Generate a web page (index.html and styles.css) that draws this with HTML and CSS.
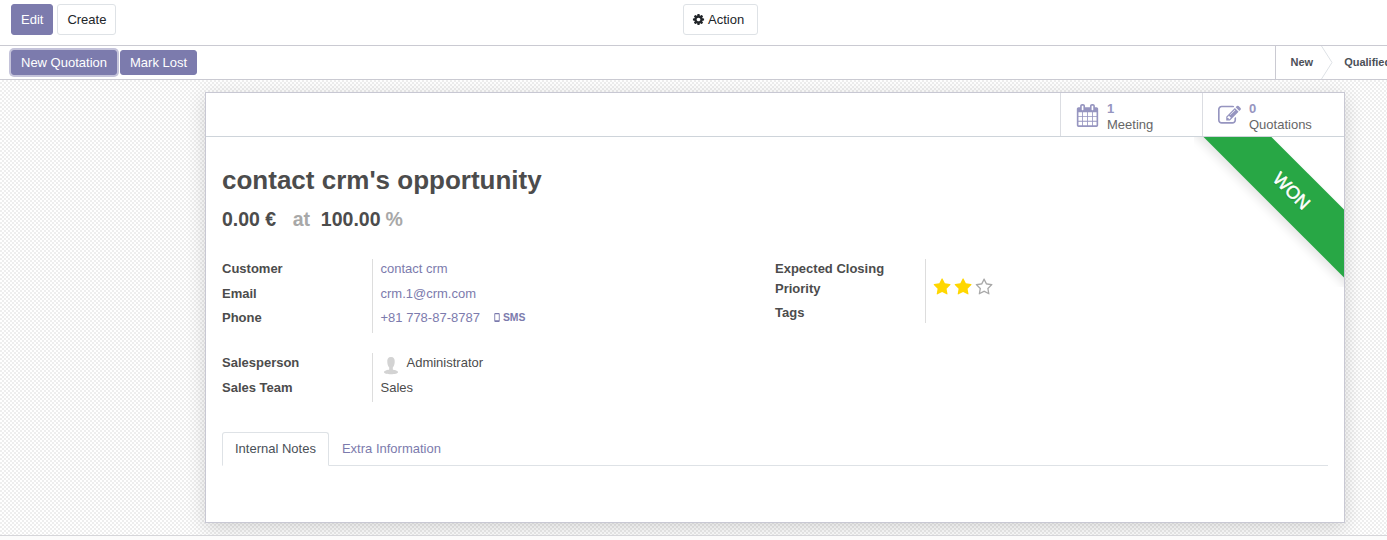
FILE: index.html
```html
<!DOCTYPE html>
<html lang="en">
<head>
<meta charset="utf-8">
<title>contact crm's opportunity</title>
<link rel="stylesheet" href="styles.css">
</head>
<body>
<header class="control-panel">
  <div class="panel-left">
    <button class="btn btn-primary">Edit</button>
    <button class="btn btn-light">Create</button>
  </div>
  <button class="btn btn-light btn-action">
    <svg class="icon-cog" viewBox="0 0 1792 1792"><path d="M1152 896q0-106-75-181t-181-75-181 75-75 181 75 181 181 75 181-75 75-181zm512-109v222q0 12-8 23t-20 13l-185 28q-19 54-39 91 35 50 107 138 10 12 10 25t-9 23q-27 37-99 108t-94 71q-12 0-26-9l-138-108q-44 23-91 38-16 136-29 186-7 28-36 28h-222q-14 0-24.5-8.5t-11.5-21.5l-28-184q-49-16-90-37l-141 107q-10 9-25 9-14 0-25-11-126-114-165-168-7-10-7-23 0-12 8-23 15-21 51-66.5t54-70.5q-27-50-41-99l-183-27q-13-2-21-12.5t-8-23.5v-222q0-12 8-23t19-13l186-28q14-46 39-92-40-57-107-138-10-12-10-24 0-10 9-23 26-36 98.5-107.5t94.5-71.5q13 0 26 10l138 107q44-23 91-38 16-136 29-186 7-28 36-28h222q14 0 24.5 8.5t11.5 21.5l28 184q49 16 90 37l142-107q9-9 24-9 13 0 25 10 129 119 165 170 7 8 7 22 0 12-8 23-15 21-51 66.5t-54 70.5q26 50 41 98l183 28q13 2 21 12.5t8 23.5z"/></svg>
    <span>Action</span>
  </button>
</header>
<div class="statusbar">
  <div class="status-buttons">
    <button class="btn btn-primary btn-focus">New Quotation</button>
    <button class="btn btn-primary">Mark Lost</button>
  </div>
  <div class="stages">
    <span class="stage">New</span>
    <svg class="chevron" viewBox="0 0 12 33"><path d="M0.5 0L11 16.5L0.5 33"/></svg>
    <span class="stage stage-next">Qualified</span>
  </div>
</div>
<main class="content">
  <section class="sheet">
    <div class="button-box">
      <a class="stat">
        <svg viewBox="0 0 1792 1792"><path d="M192 1664h288v-288h-288v288zm352 0h320v-288h-320v288zm-352-352h288v-320h-288v320zm352 0h320v-320h-320v320zm-352-384h288v-288h-288v288zm736 736h320v-288h-320v288zm-384-736h320v-288h-320v288zm768 736h288v-288h-288v288zm-384-352h320v-320h-320v320zm-352-864v-288q0-13-9.5-22.5t-22.5-9.5h-64q-13 0-22.5 9.5t-9.5 22.5v288q0 13 9.5 22.5t22.5 9.5h64q13 0 22.5-9.5t9.5-22.5zm736 864h288v-320h-288v320zm-384-384h320v-288h-320v288zm384 0h288v-288h-288v288zm32-480v-288q0-13-9.5-22.5t-22.5-9.5h-64q-13 0-22.5 9.5t-9.5 22.5v288q0 13 9.5 22.5t22.5 9.5h64q13 0 22.5-9.5t9.5-22.5zm384-64v1280q0 52-38 90t-90 38h-1408q-52 0-90-38t-38-90v-1280q0-52 38-90t90-38h128v-96q0-66 47-113t113-47h64q66 0 113 47t47 113v96h384v-96q0-66 47-113t113-47h64q66 0 113 47t47 113v96h128q52 0 90 38t38 90z"/></svg>
        <span class="stat-info"><b>1</b><span>Meeting</span></span>
      </a>
      <a class="stat">
        <svg viewBox="0 0 1792 1792"><path d="M888 1184l116-116-152-152-116 116v56h96v96h56zm440-720q-16-16-33 1l-350 350q-17 17-1 33t33-1l350-350q17-17 1-33zm80 594v190q0 119-84.5 203.5t-203.5 84.5h-832q-119 0-203.5-84.5t-84.5-203.5v-832q0-119 84.5-203.5t203.5-84.5h832q63 0 117 25 15 7 18 23 3 17-9 29l-49 49q-14 14-32 8-23-6-45-6h-832q-66 0-113 47t-47 113v832q0 66 47 113t113 47h832q66 0 113-47t47-113v-126q0-13 9-22l64-64q15-15 35-7t20 29zm-96-738l288 288-672 672h-288v-288zm444 132l-92 92-288-288 92-92q28-28 68-28t68 28l152 152q28 28 28 68t-28 68z"/></svg>
        <span class="stat-info"><b>0</b><span>Quotations</span></span>
      </a>
    </div>
    <div class="ribbon"><span>WON</span></div>
    <h1 class="title">contact crm's opportunity</h1>
    <h2 class="revenue"><span>0.00 €</span><span class="muted at">at</span><span>100.00</span><span class="muted percent">%</span></h2>
    <div class="groups">
      <dl class="group group-contact">
        <dt>Customer</dt><dd class="link">contact crm</dd>
        <dt>Email</dt><dd class="link">crm.1@crm.com</dd>
        <dt>Phone</dt><dd class="link phone">+81 778-87-8787
          <span class="sms"><svg viewBox="0 0 6 10"><path fill-rule="evenodd" d="M1 0h4q1 0 1 1v8q0 1-1 1H1q-1 0-1-1V1q0-1 1-1zM1 1.500v6.500h4V1.500z"/></svg>SMS</span></dd>
      </dl>
      <dl class="group group-closing">
        <dt>Expected Closing</dt><dd></dd>
        <dt>Priority</dt>
        <dd class="stars">
          <svg class="star-on" viewBox="0 0 1792 1792"><path d="M1728 647q0 22-26 48l-363 354 86 500q1 7 1 20 0 21-10.5 35.5t-30.5 14.5q-19 0-40-12l-449-236-449 236q-22 12-40 12-21 0-31.5-14.5t-10.5-35.5q0-6 2-20l86-500-364-354q-25-27-25-48 0-37 56-46l502-73 225-455q19-41 49-41t49 41l225 455 502 73q56 9 56 46z"/></svg>
          <svg class="star-on" viewBox="0 0 1792 1792"><path d="M1728 647q0 22-26 48l-363 354 86 500q1 7 1 20 0 21-10.5 35.5t-30.5 14.5q-19 0-40-12l-449-236-449 236q-22 12-40 12-21 0-31.5-14.5t-10.5-35.5q0-6 2-20l86-500-364-354q-25-27-25-48 0-37 56-46l502-73 225-455q19-41 49-41t49 41l225 455 502 73q56 9 56 46z"/></svg>
          <svg class="star-off" viewBox="0 0 1792 1792"><path d="M1201 1004l306-297-422-62-189-382-189 382-422 62 306 297-73 421 378-199 377 199zm527-357q0 22-26 48l-363 354 86 500q1 7 1 20 0 50-41 50-19 0-40-12l-449-236-449 236q-22 12-40 12-21 0-31.5-14.5t-10.5-35.5q0-6 2-20l86-500-364-354q-25-27-25-48 0-37 56-46l502-73 225-455q19-41 49-41t49 41l225 455 502 73q56 9 56 46z"/></svg>
        </dd>
        <dt>Tags</dt><dd></dd>
      </dl>
      <dl class="group group-sales">
        <dt>Salesperson</dt>
        <dd class="person"><svg viewBox="0 0 20 20"><path d="M10 2c-2.900 0-4 2-3.700 5 .1 2.500.8 4.500 1.900 5.500v2c-.8.600-5.200.8-5.200 2.700 0 1.300 3.300 2 7 2s7-.7 7-2c0-1.900-4.400-2.100-5.200-2.700v-2c1.100-1 1.800-3 1.900-5.500.3-3-.8-5-3.700-5z"/></svg>Administrator</dd>
        <dt>Sales Team</dt><dd>Sales</dd>
      </dl>
    </div>
    <nav class="tabs">
      <a class="tab active">Internal Notes</a>
      <a class="tab">Extra Information</a>
    </nav>
  </section>
</main>
<footer class="chatter"></footer>
</body>
</html>
```
FILE: styles.css
```css
* { box-sizing: border-box; }
body {
  margin: 0;
  height: 540px;
  overflow: hidden;
  display: flex;
  flex-direction: column;
  background: #fff;
  color: #4c4c4c;
  font: 13px/20px "Liberation Sans", Arial, sans-serif;
}
.btn {
  padding: 0 9px;
  border: 1px solid transparent;
  border-radius: 3px;
  font: inherit;
  white-space: nowrap;
}
.btn-primary { background: #7c7bad; border-color: #7c7bad; color: #fff; }
.btn-light { background: #fff; border-color: #dee2e6; color: #212529; }
.control-panel {
  flex: none;
  height: 46px;
  padding: 4px 0 0 11px;
  border-bottom: 1px solid #cacad2;
  display: flex;
  align-items: flex-start;
}
.control-panel .btn { height: 31px; }
.panel-left { width: 672px; display: flex; gap: 4px; }
.btn-action { width: 75px; display: flex; align-items: center; gap: 3px; }
.icon-cog { width: 13px; height: 13px; margin-left: -1px; fill: #212529; }
.statusbar {
  flex: none;
  height: 34px;
  padding-left: 11px;
  border-bottom: 1px solid #cacad2;
  display: flex;
  justify-content: space-between;
}
.status-buttons { display: flex; gap: 3px; padding-top: 4px; }
.status-buttons .btn { height: 25px; }
.status-buttons .btn-focus { box-shadow: 0 0 0 2px rgba(124, 123, 173, .45); }
.stages {
  width: 112px;
  flex: none;
  overflow: hidden;
  display: flex;
  align-items: center;
  border-left: 1px solid #cacad2;
  font-size: 11px;
  line-height: 18px;
  font-weight: bold;
  color: #4c5058;
}
.stage { margin: -2px 0 0 14.500px; }
.stage-next { margin-left: 11px; }
.chevron { flex: none; width: 12px; height: 33px; margin-left: 8px; fill: none; stroke: #dee2e6; }
.content {
  flex: none;
  height: 455px;
  padding: 12px 42px 0 205px;
  overflow: hidden;
  background: repeating-conic-gradient(#eee 0 25%, #fff 0 50%) 0 0 / 4px 4px;
}
.sheet {
  position: relative;
  height: 431px;
  padding: 0 16px;
  background: #fff;
  border: 1px solid #c8c8d3;
  box-shadow: 0 5px 18px rgba(0, 0, 0, .16);
}
.button-box {
  height: 44px;
  margin: 0 -16px;
  display: flex;
  justify-content: flex-end;
  border-bottom: 1px solid #ced4da;
}
.stat {
  width: 142px;
  padding: 8px 0 0 14px;
  border-left: 1px solid #dbdde2;
  display: flex;
  gap: 8px;
}
.stat svg { width: 23px; height: 23px; margin: 3px 0 0 1px; fill: #9695c0; }
.stat-info { display: flex; flex-direction: column; line-height: 16px; color: #666; }
.stat-info b { color: #9695c0; }
.ribbon {
  position: absolute;
  top: 44px;
  right: 0;
  width: 150px;
  height: 150px;
  overflow: hidden;
}
.ribbon span {
  position: absolute;
  left: -15px;
  top: 30px;
  width: 225px;
  height: 48px;
  background: #28a745;
  box-shadow: 0 5px 10px rgba(0, 0, 0, .1);
  color: #fff;
  font-size: 18px;
  line-height: 48px;
  text-align: center;
  -webkit-text-stroke: .5px #fff;
  text-shadow: 0 1px 1px rgba(0, 0, 0, .2);
  transform: rotate(45deg);
}
.title { margin: 27px 0 0; font-size: 26px; line-height: 32px; }
.revenue { margin: 11px 0 0; font-size: 19.500px; line-height: 24px; display: flex; }
.muted { color: #a8a8a8; }
.at { margin: 0 10.800px 0 16.500px; }
.percent { margin-left: 5px; }
.groups {
  margin-top: 28px;
  display: grid;
  grid-template-columns: 553px 1fr;
  row-gap: 20px;
  align-items: start;
}
.group { margin: 0; display: grid; grid-template-columns: 150px 1fr; }
.group dt { font-weight: bold; }
.group dd { margin: 0; padding-left: 7.500px; border-left: 1px solid #ddd; }
.group-contact { grid-template-rows: 25px 24px 25px; }
.group-closing { grid-template-rows: 20px 24px 20px; }
.group-sales { grid-template-rows: 25px 24px; }
.link { color: #7c7bad; }
.phone { display: flex; gap: 14px; }
.sms { display: flex; font-size: 10.400px; line-height: 19px; font-weight: bold; }
.sms svg { width: 6px; height: 9px; margin: 5px 3px 0 0; fill: #7c7bad; }
.stars { display: flex; gap: 3px; }
.group .stars { padding-left: 7px; }
.stars svg { width: 18.200px; height: 18.200px; margin-top: -1.500px; }
.star-on { fill: #ffd700; }
.star-off { fill: #a8a8a8; }
.person { display: flex; }
.person svg { width: 20px; height: 20px; margin: 2px 6px 0 0; fill: #d3d3d3; }
.tabs { margin-top: 30px; height: 34px; display: flex; border-bottom: 1px solid #dee2e6; }
.tab { height: 34px; padding: 6px 12px; border: 1px solid transparent; color: #7c7bad; }
.tab.active {
  background: #fff;
  border-color: #dee2e6;
  border-bottom-color: #fff;
  border-radius: 3px 3px 0 0;
  color: #495057;
}
.chatter { flex: 1; background: #fcfcfc; border-top: 1px solid #d6d6da; }
```
